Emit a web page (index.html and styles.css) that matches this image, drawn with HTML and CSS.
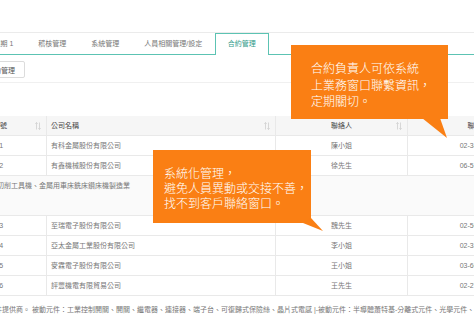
FILE: index.html
```html
<!DOCTYPE html>
<html lang="zh-Hant">
<head>
    <meta charset="UTF-8">
    <meta name="viewport" content="width=device-width, initial-scale=1.0">
    <title>合約管理</title>
    <link rel="stylesheet" href="styles.css">
</head>
<body>
    <div class="page">
        <div class="top-space"></div>

        <ul class="tabs">
            <li class="tab first">週期 1</li>
            <li class="tab">稽核管理</li>
            <li class="tab">系統管理</li>
            <li class="tab">人員相關管理/設定</li>
            <li class="tab active">合約管理</li>
        </ul>

        <div class="toolbar">
            <button class="btn">合約管理</button>
        </div>

        <div class="filter-space"></div>

        <div class="grid">
            <div class="row head">
                <div class="cell c1">合約編號<span class="sort"><svg width="6" height="8" viewBox="0 0 6 8"><path d="M1.5 7.5V0.5M0.3 1.8L1.5 0.5L2.7 1.8M4.5 0.5V7.5M3.3 6.2L4.5 7.5L5.7 6.2" fill="none" stroke="#cfcfcf" stroke-width="0.8"/></svg></span></div>
                <div class="cell c2">公司名稱<span class="sort"><svg width="6" height="8" viewBox="0 0 6 8"><path d="M1.5 7.5V0.5M0.3 1.8L1.5 0.5L2.7 1.8M4.5 0.5V7.5M3.3 6.2L4.5 7.5L5.7 6.2" fill="none" stroke="#cfcfcf" stroke-width="0.8"/></svg></span></div>
                <div class="cell c3">聯絡人<span class="sort"><svg width="6" height="8" viewBox="0 0 6 8"><path d="M1.5 7.5V0.5M0.3 1.8L1.5 0.5L2.7 1.8M4.5 0.5V7.5M3.3 6.2L4.5 7.5L5.7 6.2" fill="none" stroke="#cfcfcf" stroke-width="0.8"/></svg></span></div>
                <div class="cell c4">聯絡電話</div>
            </div>
            <div class="row">
                <div class="cell c1">A00001</div>
                <div class="cell c2">有科金屬股份有限公司</div>
                <div class="cell c3">陳小姐</div>
                <div class="cell c4">02-3456-7890</div>
            </div>
            <div class="row">
                <div class="cell c1">A00002</div>
                <div class="cell c2">有鑫機械股份有限公司</div>
                <div class="cell c3">徐先生</div>
                <div class="cell c4">06-5123-4567</div>
            </div>
            <div class="row expand">
                <div class="expand-text">金屬切削工具機、金屬用車床銑床鑽床機製造業</div>
            </div>
            <div class="row">
                <div class="cell c1">A00003</div>
                <div class="cell c2">至瑞電子股份有限公司</div>
                <div class="cell c3">魏先生</div>
                <div class="cell c4">02-5678-1234</div>
            </div>
            <div class="row">
                <div class="cell c1">A00004</div>
                <div class="cell c2">亞太金屬工業股份有限公司</div>
                <div class="cell c3">李小姐</div>
                <div class="cell c4">02-3321-8899</div>
            </div>
            <div class="row">
                <div class="cell c1">A00005</div>
                <div class="cell c2">麥霖電子股份有限公司</div>
                <div class="cell c3">王小姐</div>
                <div class="cell c4">03-6612-3456</div>
            </div>
            <div class="row">
                <div class="cell c1">A00006</div>
                <div class="cell c2">評豐機電有限貿易公司</div>
                <div class="cell c3">王先生</div>
                <div class="cell c4">02-2765-4321</div>
            </div>
            <div class="row note">
                <div class="expand-text">零件提供商。 被動元件：工業控制開關、開關、繼電器、連接器、端子台、可復歸式保險絲、晶片式電感 |-被動元件：半導體蕭特基-分離式元件、光學元件、LED晶片</div>
            </div>
        </div>

        <!-- 說明框 -->
        <div class="callout callout-top">合約負責人可依系統<br>上業務窗口聯繫資訊，<br>定期關切。</div>
        <div class="callout callout-mid">系統化管理，<br>避免人員異動或交接不善，<br>找不到客戶聯絡窗口。</div>
    </div>
</body>
</html>
```

FILE: styles.css
```css
body {
    margin: 0;
    background: #fff;
    font-family: "Liberation Sans", "Noto Sans CJK TC", sans-serif;
    font-size: 7px;
    color: #777;
}

.page {
    position: relative;
    width: 474px;
    height: 324px;
    overflow: hidden;
}

.top-space {
    height: 32px;
}

/* 頁籤 */
.tabs {
    display: flex;
    margin: 0;
    padding: 0;
    list-style: none;
    height: 21px;
    border-top: 1px solid #ebebeb;
    border-bottom: 1px solid #5cc3b3;
}

.tab {
    padding: 0 12.5px;
    line-height: 21px;
    color: #777;
    white-space: nowrap;
}

.tab.first {
    margin-left: -19px;
}

.tab.active {
    box-sizing: border-box;
    height: 22px;
    margin-bottom: -1px;
    padding: 0 12px;
    line-height: 20px;
    border: 1px solid #5cc3b3;
    border-bottom: none;
    background: #fff;
    color: #2f9a88;
}

.toolbar {
    height: 28px;
    box-sizing: border-box;
    padding-top: 6px;
    border-bottom: 1px solid #f0f0f0;
}

.btn {
    margin-left: -23px;
    height: 17px;
    padding: 0 9px;
    border: 1px solid #dcdcdc;
    border-radius: 2px;
    background: #fff;
    font-family: inherit;
    font-size: 7px;
    color: #555;
}

.filter-space {
    height: 33px;
}

/* 表格 */
.grid {
    margin-left: -25px;
    width: 585px;
}

.row {
    display: flex;
    height: 20px;
    box-sizing: border-box;
    border-bottom: 1px solid #e9e9e9;
}

.row.head {
    background: #f6f6f6;
    color: #444;
}

.cell {
    position: relative;
    box-sizing: border-box;
    padding: 0 4px;
    line-height: 19px;
    white-space: nowrap;
    border-right: 1px solid #e9e9e9;
}

.c1 { width: 72px; }
.c2 { width: 229px; }
.c3 { width: 132px; text-align: center; }
.c4 { width: 148px; text-align: center; }

.sort {
    position: absolute;
    right: 5px;
    top: 6px;
    line-height: 0;
}

.row.expand {
    height: 40px;
    background: #fafafa;
}

.expand-text {
    padding-left: 8px;
    line-height: 19px;
    white-space: nowrap;
}

.row.note {
    height: 27px;
    border-bottom: none;
}

.row.note .expand-text {
    padding-top: 4px;
    padding-left: 13px;
}

/* 說明框 */
.callout {
    position: absolute;
    background: #fa7f14;
    color: #fff;
    font-family: "Noto Sans CJK TC", sans-serif;
    font-size: 12px;
    font-weight: 300;
    box-sizing: border-box;
}

.callout::after {
    content: "";
    position: absolute;
    background: #fa7f14;
}

.callout-top {
    left: 291px;
    top: 45px;
    width: 157px;
    height: 74px;
    padding: 15px 0 0 20px;
    line-height: 16.5px;
}

.callout-top::after {
    left: 131px;
    top: 73px;
    width: 26px;
    height: 20px;
    clip-path: polygon(0 0, 18px 0, 25px 20px);
}

.callout-mid {
    left: 153px;
    top: 150px;
    width: 158px;
    height: 73px;
    padding: 14.5px 0 0 11px;
    line-height: 15px;
}

.callout-mid::after {
    left: 148px;
    top: 66px;
    width: 24px;
    height: 17px;
    clip-path: polygon(2px 7px, 10px 2px, 22px 15px);
}
```
